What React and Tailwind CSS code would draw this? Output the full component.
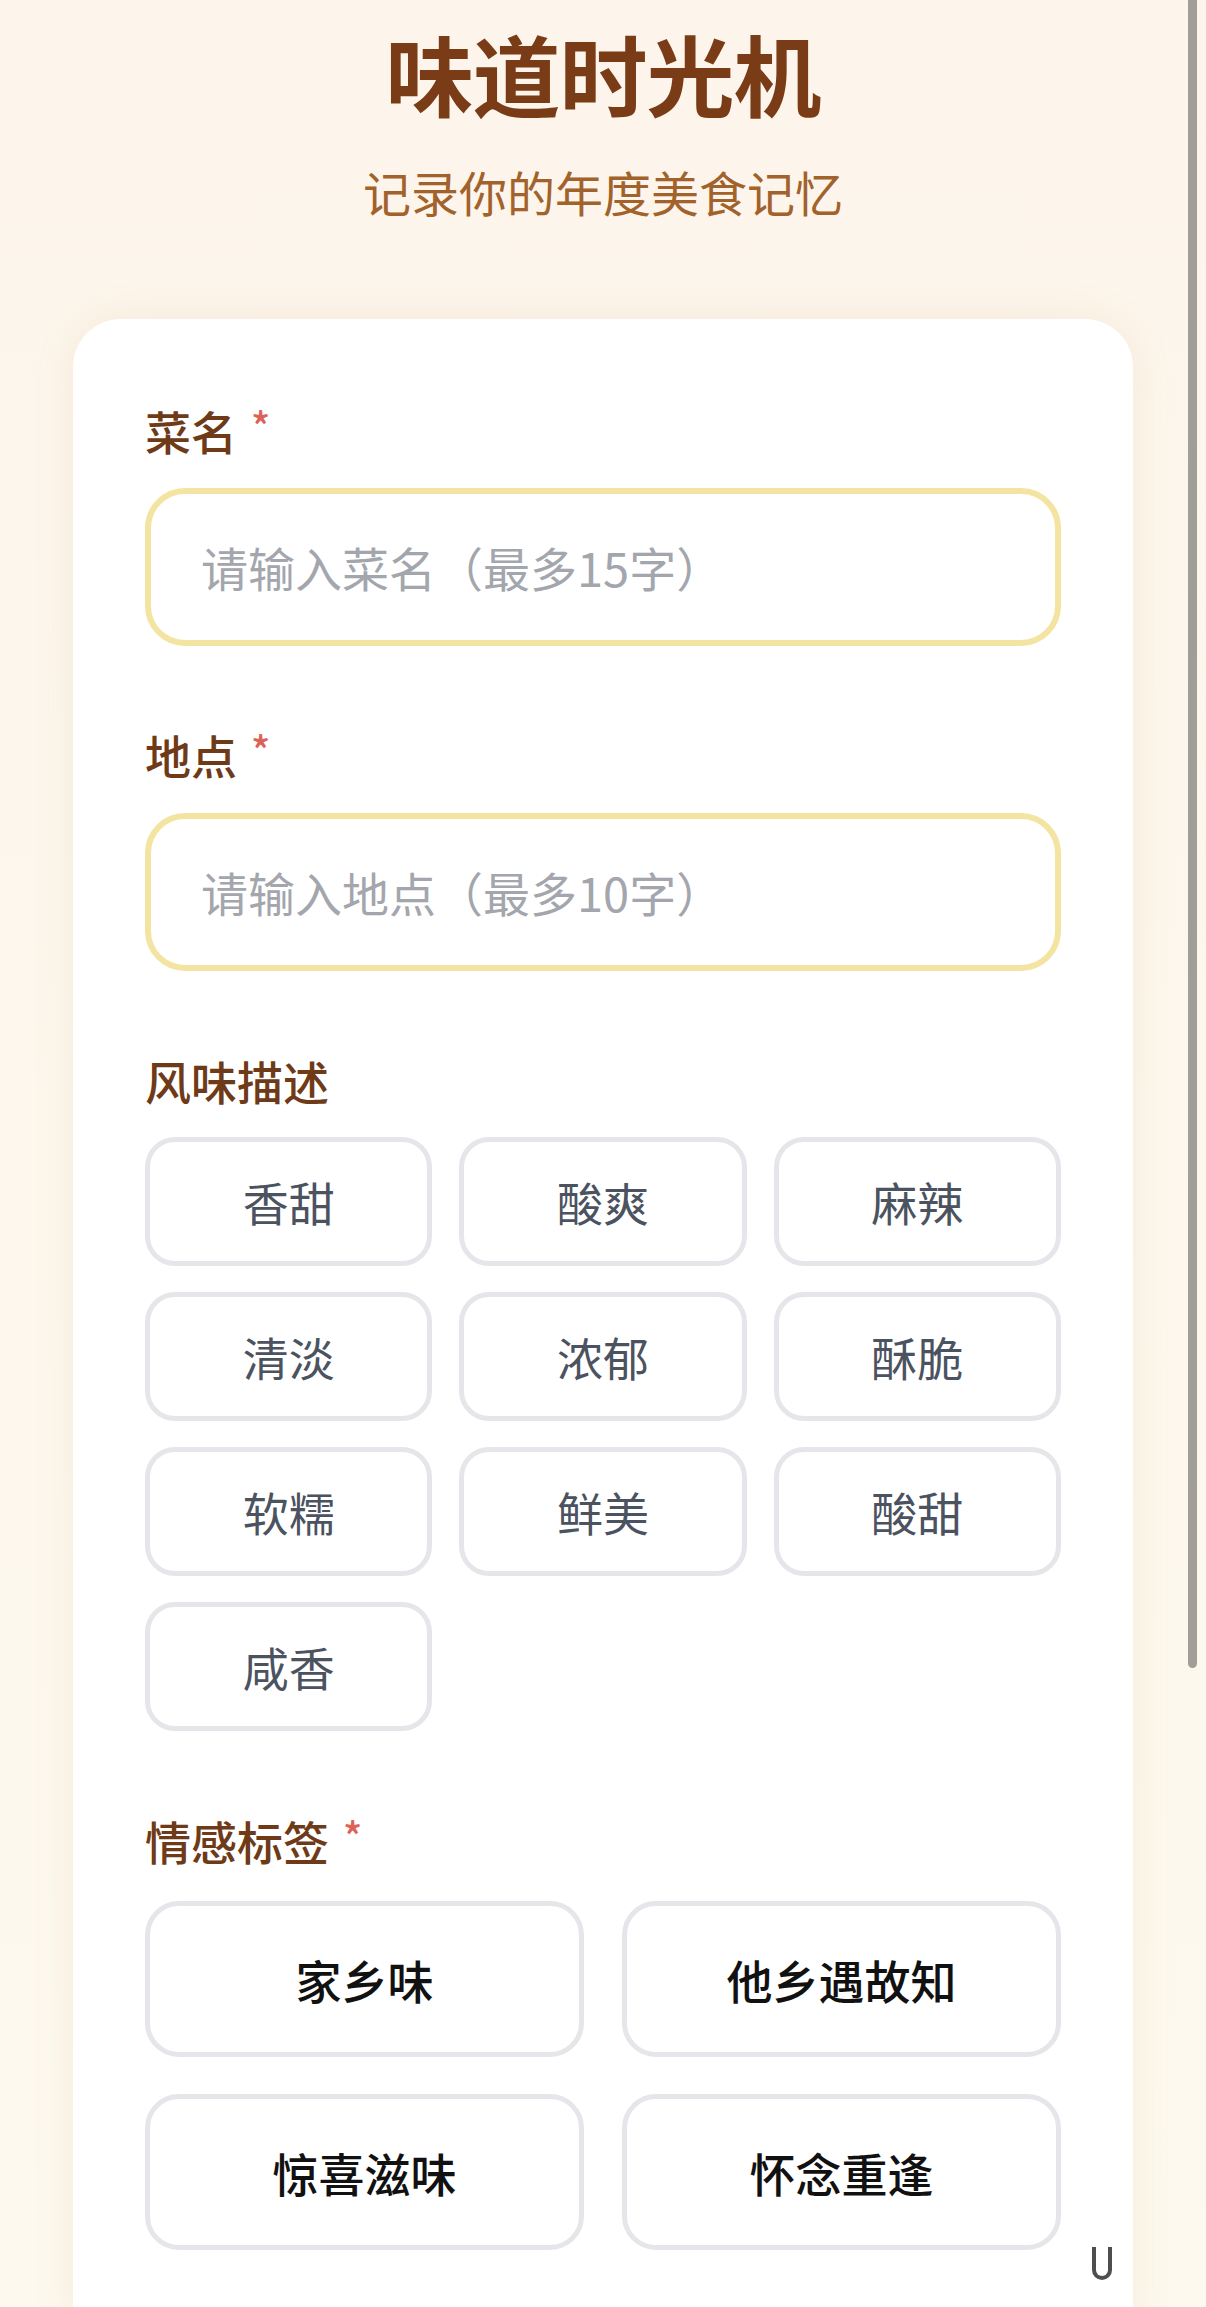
import React from "react";

const flavors = ["香甜", "酸爽", "麻辣", "清淡", "浓郁", "酥脆", "软糯", "鲜美", "酸甜", "咸香"];
const moods = ["家乡味", "他乡遇故知", "惊喜滋味", "怀念重逢"];

function Label({ text, required }) {
  return (
    <div className="flex items-center gap-[14px] text-[46px] leading-none font-medium text-[#6e3a17]">
      <span>{text}</span>
      {required && <span className="text-[#dc6258] text-[40px] -mt-[10px]">*</span>}
    </div>
  );
}

function TextField({ placeholder }) {
  return (
    <div className="h-[158px] rounded-[40px] border-[6px] border-[#f4e4a2] bg-white flex items-center pl-[50px]">
      <input
        className="w-full bg-transparent outline-none text-[47px] text-[#4b5563] placeholder:text-[#a3a6ad]"
        placeholder={placeholder}
      />
    </div>
  );
}

export default function App() {
  return (
    <div
      className="relative min-h-[2307px] overflow-hidden bg-gradient-to-b from-[#fdf5eb] to-[#fdf9ee]"
      style={{ fontFamily: '"Noto Sans CJK SC", "Noto Sans", sans-serif' }}
    >
      <header className="flex flex-col items-center pt-[28px]">
        <h1 className="text-[88px] leading-none font-bold text-[#7a3c17] tracking-[-1px]">味道时光机</h1>
        <p className="mt-[51px] text-[48px] leading-none text-[#a2622c]">记录你的年度美食记忆</p>
      </header>

      <main className="mx-[73px] mt-[104px] rounded-t-[48px] bg-white px-[72px] pt-[88px] pb-[80px] shadow-[0_0_40px_rgba(190,150,100,0.12)]">
        <Label text="菜名" required />
        <div className="mt-[35px]">
          <TextField placeholder="请输入菜名（最多15字）" />
        </div>

        <div className="mt-[85px]">
          <Label text="地点" required />
        </div>
        <div className="mt-[36px]">
          <TextField placeholder="请输入地点（最多10字）" />
        </div>

        <div className="mt-[86px]">
          <Label text="风味描述" />
        </div>
        <div className="mt-[34px] grid grid-cols-3 gap-x-[27px] gap-y-[26px]">
          {flavors.map((f) => (
            <button
              key={f}
              className="h-[129px] rounded-[30px] border-[5px] border-[#e5e6ea] bg-white text-[46px] text-[#4b5260]"
            >
              {f}
            </button>
          ))}
        </div>

        <div className="mt-[86px]">
          <Label text="情感标签" required />
        </div>
        <div className="mt-[38px] grid grid-cols-2 gap-x-[38px] gap-y-[37px]">
          {moods.map((m) => (
            <button
              key={m}
              className="h-[156px] rounded-[34px] border-[5px] border-[#e5e6ea] bg-white text-[46px] font-medium text-[#111]"
            >
              {m}
            </button>
          ))}
        </div>
      </main>

      {/* scrollbar */}
      <div className="absolute right-[9px] top-0 h-[1668px] w-[9px] rounded-b-full bg-[#a19e99]" />
      {/* small floating handle */}
      <div className="absolute left-[1092px] top-[2247px] h-[33px] w-[20px] rounded-b-[10px] border-x-[4px] border-b-[4px] border-[#222] opacity-80" />
    </div>
  );
}
